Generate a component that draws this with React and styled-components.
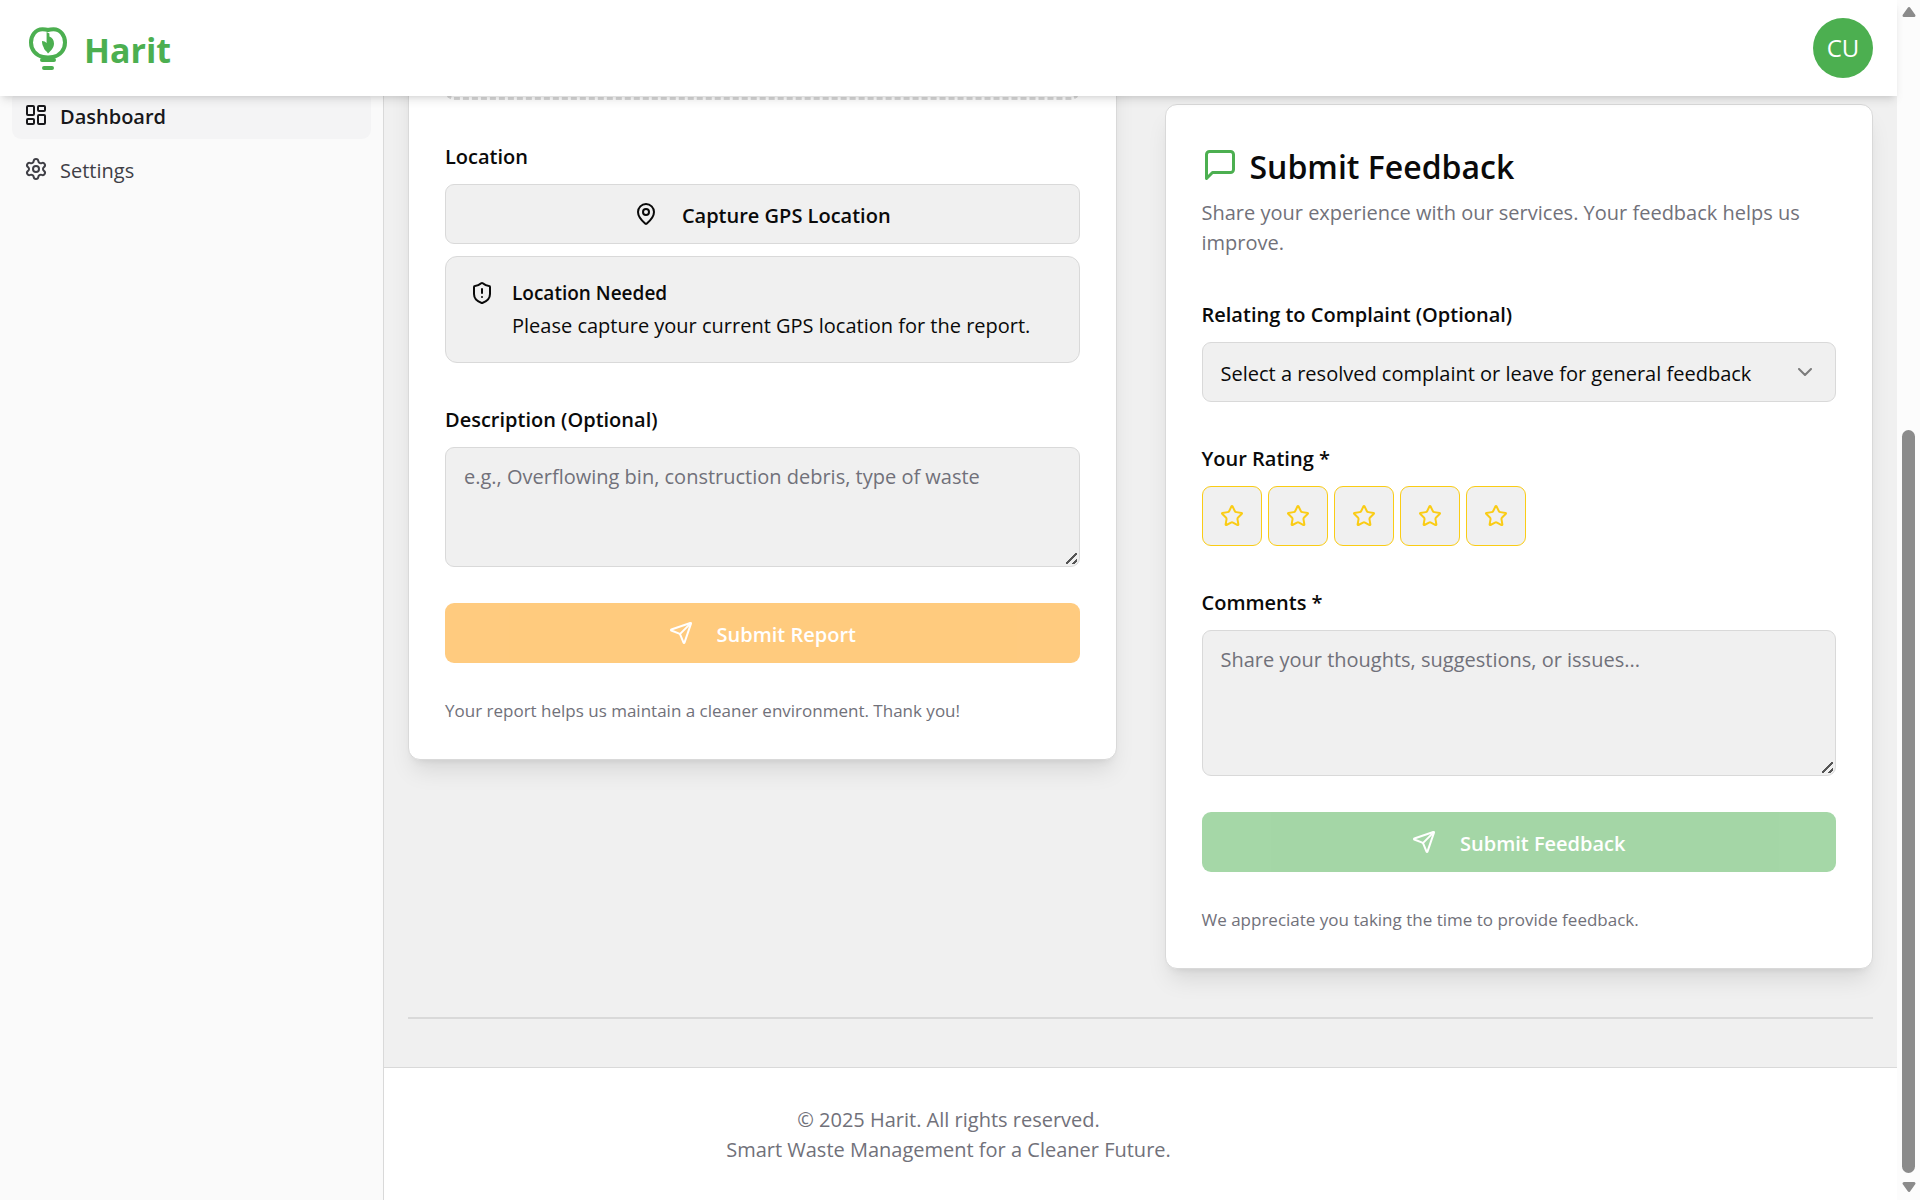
import React, { useState } from "react";
import styled, { createGlobalStyle } from "styled-components";
import {
  LayoutDashboard,
  Settings,
  MapPin,
  ShieldAlert,
  Send,
  ChevronDown,
  Star,
} from "lucide-react";

const c = {
  green: "#4caf50",
  orange: "#ff9800",
  yellow: "#facc15",
  border: "#d9d9d9",
  surface: "#f0f0f0",
  text: "#0a0a0a",
  muted: "#71717a",
  scroll: "#8b8b8b",
};

const GlobalStyle = createGlobalStyle`
  *, *::before, *::after { box-sizing: border-box; }
  body {
    margin: 0;
    background: #fff;
    color: ${c.text};
    font-family: "Open Sans", "Noto Sans", sans-serif;
    font-size: 20px;
    line-height: 30px;
  }
  button, select, textarea { font: inherit; color: inherit; margin: 0; }
  h2, p { margin: 0; }
`;

const Window = styled.div`
  display: grid;
  grid-template-columns: minmax(0, 1fr) 23px;
  min-height: 100vh;
`;

const Page = styled.div`
  display: flex;
  flex-direction: column;
`;

const Header = styled.header`
  position: sticky;
  top: 0;
  z-index: 3;
  display: flex;
  align-items: center;
  justify-content: space-between;
  height: 96px;
  padding: 0 24px;
  background: #fff;
  box-shadow: 0 6px 9px -2px rgba(0, 0, 0, 0.1), 0 3px 6px -3px rgba(0, 0, 0, 0.1);
`;

const Brand = styled.a`
  display: flex;
  align-items: center;
  gap: 12px;
  color: ${c.green};
  font-size: 34px;
  line-height: 48px;
  font-weight: 700;
  text-decoration: none;
`;

const BrandName = styled.span`
  padding-top: 3px;
`;

const Avatar = styled.button`
  width: 60px;
  height: 60px;
  padding: 0;
  border: 0;
  border-radius: 50%;
  background: ${c.green};
  color: #fff;
  font-size: 24px;
`;

const Body = styled.div`
  flex: 1;
  display: grid;
  grid-template-columns: 384px minmax(0, 1fr);
  grid-template-rows: 1fr auto;
`;

const Sidebar = styled.nav`
  grid-column: 1;
  grid-row: 1 / 3;
  z-index: 1;
  display: flex;
  flex-direction: column;
  gap: 6px;
  padding: 0 12px;
  background: #fafafa;
  border-right: 1px solid ${c.border};
`;

const NavItem = styled.a`
  display: flex;
  align-items: center;
  gap: 12px;
  height: 48px;
  padding: 0 12px;
  border-radius: 9px;
  background: ${(p) => (p.$active ? "#f4f4f5" : "transparent")};
  color: ${(p) => (p.$active ? "#18181b" : "#3f3f46")};
  font-weight: ${(p) => (p.$active ? 600 : 400)};
  text-decoration: none;
  &:first-child { margin-top: -5px; }
`;

const ControlText = styled.span`
  padding-top: 3px;
`;

const Main = styled.main`
  grid-column: 2;
  grid-row: 1;
  padding: 0 24px 48px;
  background: ${c.surface};
`;

const Columns = styled.div`
  display: grid;
  grid-template-columns: repeat(2, minmax(0, 1fr));
  gap: 48px;
  align-items: start;
`;

const Card = styled.section`
  display: flex;
  flex-direction: column;
  gap: 36px;
  margin-top: ${(p) => (p.$scrolled ? "-57px" : "8px")};
  padding: ${(p) => (p.$scrolled ? "0" : "36px")} 36px 36px;
  background: #fff;
  border: 1px solid ${c.border};
  border-radius: 12px;
  box-shadow: 0 15px 23px -5px rgba(0, 0, 0, 0.1), 0 6px 9px -6px rgba(0, 0, 0, 0.1);
`;

const DropZone = styled.div`
  height: 60px;
  border: 3px dashed ${c.border};
  border-radius: 9px;
`;

const CardHead = styled.header`
  display: flex;
  flex-direction: column;
  gap: 9px;
`;

const CardTitle = styled.h2`
  display: flex;
  align-items: center;
  gap: 12px;
  font-size: 32px;
  line-height: 45px;
  font-weight: 600;
  svg { color: ${c.green}; }
`;

const Muted = styled.p`
  color: ${c.muted};
`;

const Note = styled.p`
  color: ${c.muted};
  font-size: 17px;
  line-height: 24px;
`;

const Field = styled.div`
  display: flex;
  flex-direction: column;
  gap: 12px;
`;

const Label = styled.label`
  padding-top: 6px;
  font-weight: 600;
`;

const Button = styled.button`
  display: flex;
  align-items: center;
  justify-content: center;
  gap: 24px;
  height: 60px;
  border: ${(p) => (p.$fill ? "0" : `1px solid ${c.border}`)};
  border-radius: 9px;
  background: ${(p) => p.$fill || c.surface};
  color: ${(p) => (p.$fill ? "#fff" : c.text)};
  font-weight: 600;
  &:disabled { opacity: 0.5; }
`;

const Alert = styled.div`
  display: flex;
  gap: 18px;
  padding: 24px 24px 21px;
  border: 1px solid ${c.border};
  border-radius: 12px;
  background: ${c.surface};
  svg { flex: none; }
`;

const AlertBody = styled.div`
  display: flex;
  flex-direction: column;
  gap: 6px;
`;

const AlertTitle = styled.strong`
  font-size: 19px;
  line-height: 24px;
  font-weight: 600;
`;

const TextArea = styled.textarea`
  display: block;
  width: 100%;
  height: ${(p) => p.$height}px;
  padding: 14px 18px;
  border: 1px solid ${c.border};
  border-radius: 9px;
  background: ${c.surface};
  resize: vertical;
  &::placeholder { color: ${c.muted}; opacity: 1; }
  &::-webkit-resizer {
    background: linear-gradient(
      135deg,
      transparent 7px, #555 7px, #555 9px,
      transparent 9px, transparent 12px,
      #555 12px, #555 14px, transparent 14px
    ) right 2px bottom 2px / 11px 11px no-repeat;
  }
`;

const SelectBox = styled.div`
  display: grid;
  align-items: center;
  > * { grid-area: 1 / 1; }
  > svg {
    justify-self: end;
    margin-right: 19px;
    opacity: 0.5;
    pointer-events: none;
  }
`;

const Select = styled.select`
  appearance: none;
  width: 100%;
  height: 60px;
  padding: 3px 54px 0 18px;
  border: 1px solid ${c.border};
  border-radius: 9px;
  background: ${c.surface};
`;

const Stars = styled.div`
  display: flex;
  gap: 6px;
`;

const StarButton = styled.button`
  display: grid;
  place-items: center;
  width: 60px;
  height: 60px;
  padding: 0;
  border: 1px solid ${c.yellow};
  border-radius: 9px;
  background: ${c.surface};
  color: ${c.yellow};
`;

const Rule = styled.hr`
  height: 2px;
  margin: 48px 0 0;
  border: 0;
  background: ${c.border};
`;

const Footer = styled.footer`
  grid-column: 1 / -1;
  grid-row: 2;
  padding: 37px 24px 35px;
  border-top: 1px solid ${c.border};
  background: #fff;
  color: ${c.muted};
  text-align: center;
`;

const ScrollTrack = styled.div`
  position: sticky;
  top: 0;
  display: grid;
  grid-template-rows: 24px minmax(0, 406fr) minmax(0, 743fr) 27px;
  justify-items: center;
  height: 100vh;
  background: #fcfcfc;
`;

const Arrow = styled.svg`
  grid-row: ${(p) => (p.$down ? 4 : 1)};
  align-self: center;
`;

const Thumb = styled.div`
  grid-row: 3;
  width: 13px;
  border-radius: 7px;
  background: ${c.scroll};
`;

function Logo() {
  return (
    <svg width="48" height="48" viewBox="0 0 48 48" fill="none" stroke="currentColor" strokeWidth="4" strokeLinecap="round" aria-hidden="true">
      <path d="M24 6 C22 5.400 20.300 5.300 18.500 5.300 C11.500 5.300 7 11.500 7 18.500 C7 26 12 31.500 19 33 C22 33.600 26 33.600 29 33 C36 31.500 41 26 41 18.500 C41 11.500 36.500 5.300 29.500 5.300 C27.700 5.300 26 5.400 24 6 Z" />
      <path d="M18 36 H30 M20 44 H28" />
      <path d="M22.600 8 L25.400 9.500 V12.500 C28 13.500 30 16 30 19.500 C30 24 27 26.500 24 29.500 C22.500 27 20 26 19.500 23 C18.300 21 18 19 18 17 C20 17 21.500 17.800 22.600 19 Z" fill="currentColor" stroke="none" />
    </svg>
  );
}

function SpeechBubble() {
  return (
    <svg width="36" height="36" viewBox="0 0 24 24" fill="none" stroke="currentColor" strokeWidth="2" strokeLinecap="round" strokeLinejoin="round" aria-hidden="true">
      <path d="M21 15a2 2 0 0 1-2 2H7l-4 4V5a2 2 0 0 1 2-2h14a2 2 0 0 1 2 2z" />
    </svg>
  );
}

function ScrollArrow({ down }) {
  return (
    <Arrow $down={down} width="16" height="12" viewBox="0 0 16 12" fill={c.scroll} stroke={c.scroll} strokeWidth="3" strokeLinejoin="round">
      <path d={down ? "M8 9.500 L13 2.500 H3 Z" : "M8 2.500 L13 9.500 H3 Z"} />
    </Arrow>
  );
}

export default function App() {
  const [rating, setRating] = useState(0);
  return (
    <>
      <GlobalStyle />
      <Window>
        <Page>
          <Header>
            <Brand href="#"><Logo /><BrandName>Harit</BrandName></Brand>
            <Avatar type="button">CU</Avatar>
          </Header>
          <Body>
            <Sidebar>
              <NavItem href="#dashboard" $active><LayoutDashboard size={24} /><ControlText>Dashboard</ControlText></NavItem>
              <NavItem href="#settings"><Settings size={24} /><ControlText>Settings</ControlText></NavItem>
            </Sidebar>
            <Main>
              <Columns>
                <Card $scrolled>
                  <DropZone />
                  <Field>
                    <Label as="span">Location</Label>
                    <Button type="button"><MapPin size={24} /><ControlText>Capture GPS Location</ControlText></Button>
                    <Alert>
                      <ShieldAlert size={24} />
                      <AlertBody>
                        <AlertTitle>Location Needed</AlertTitle>
                        <p>Please capture your current GPS location for the report.</p>
                      </AlertBody>
                    </Alert>
                  </Field>
                  <Field>
                    <Label htmlFor="description">Description (Optional)</Label>
                    <TextArea id="description" $height={120} placeholder="e.g., Overflowing bin, construction debris, type of waste" />
                  </Field>
                  <Button type="submit" $fill={c.orange} disabled><Send size={24} /><ControlText>Submit Report</ControlText></Button>
                  <Note>Your report helps us maintain a cleaner environment. Thank you!</Note>
                </Card>
                <Card>
                  <CardHead>
                    <CardTitle><SpeechBubble /><ControlText>Submit Feedback</ControlText></CardTitle>
                    <Muted>Share your experience with our services. Your feedback helps us improve.</Muted>
                  </CardHead>
                  <Field>
                    <Label htmlFor="complaint">Relating to Complaint (Optional)</Label>
                    <SelectBox>
                      <Select id="complaint">
                        <option>Select a resolved complaint or leave for general feedback</option>
                      </Select>
                      <ChevronDown size={24} />
                    </SelectBox>
                  </Field>
                  <Field>
                    <Label as="span" id="rating">Your Rating *</Label>
                    <Stars role="group" aria-labelledby="rating">
                      {[1, 2, 3, 4, 5].map((n) => (
                        <StarButton key={n} type="button" onClick={() => setRating(n)}>
                          <Star size={24} fill={n <= rating ? "currentColor" : "none"} />
                        </StarButton>
                      ))}
                    </Stars>
                  </Field>
                  <Field>
                    <Label htmlFor="comments">Comments *</Label>
                    <TextArea id="comments" $height={146} placeholder="Share your thoughts, suggestions, or issues..." />
                  </Field>
                  <Button type="submit" $fill={c.green} disabled><Send size={24} /><ControlText>Submit Feedback</ControlText></Button>
                  <Note>We appreciate you taking the time to provide feedback.</Note>
                </Card>
              </Columns>
              <Rule />
            </Main>
            <Footer>
              <p>© 2025 Harit. All rights reserved.</p>
              <p>Smart Waste Management for a Cleaner Future.</p>
            </Footer>
          </Body>
        </Page>
        <ScrollTrack aria-hidden="true">
          <ScrollArrow />
          <Thumb />
          <ScrollArrow down />
        </ScrollTrack>
      </Window>
    </>
  );
}
